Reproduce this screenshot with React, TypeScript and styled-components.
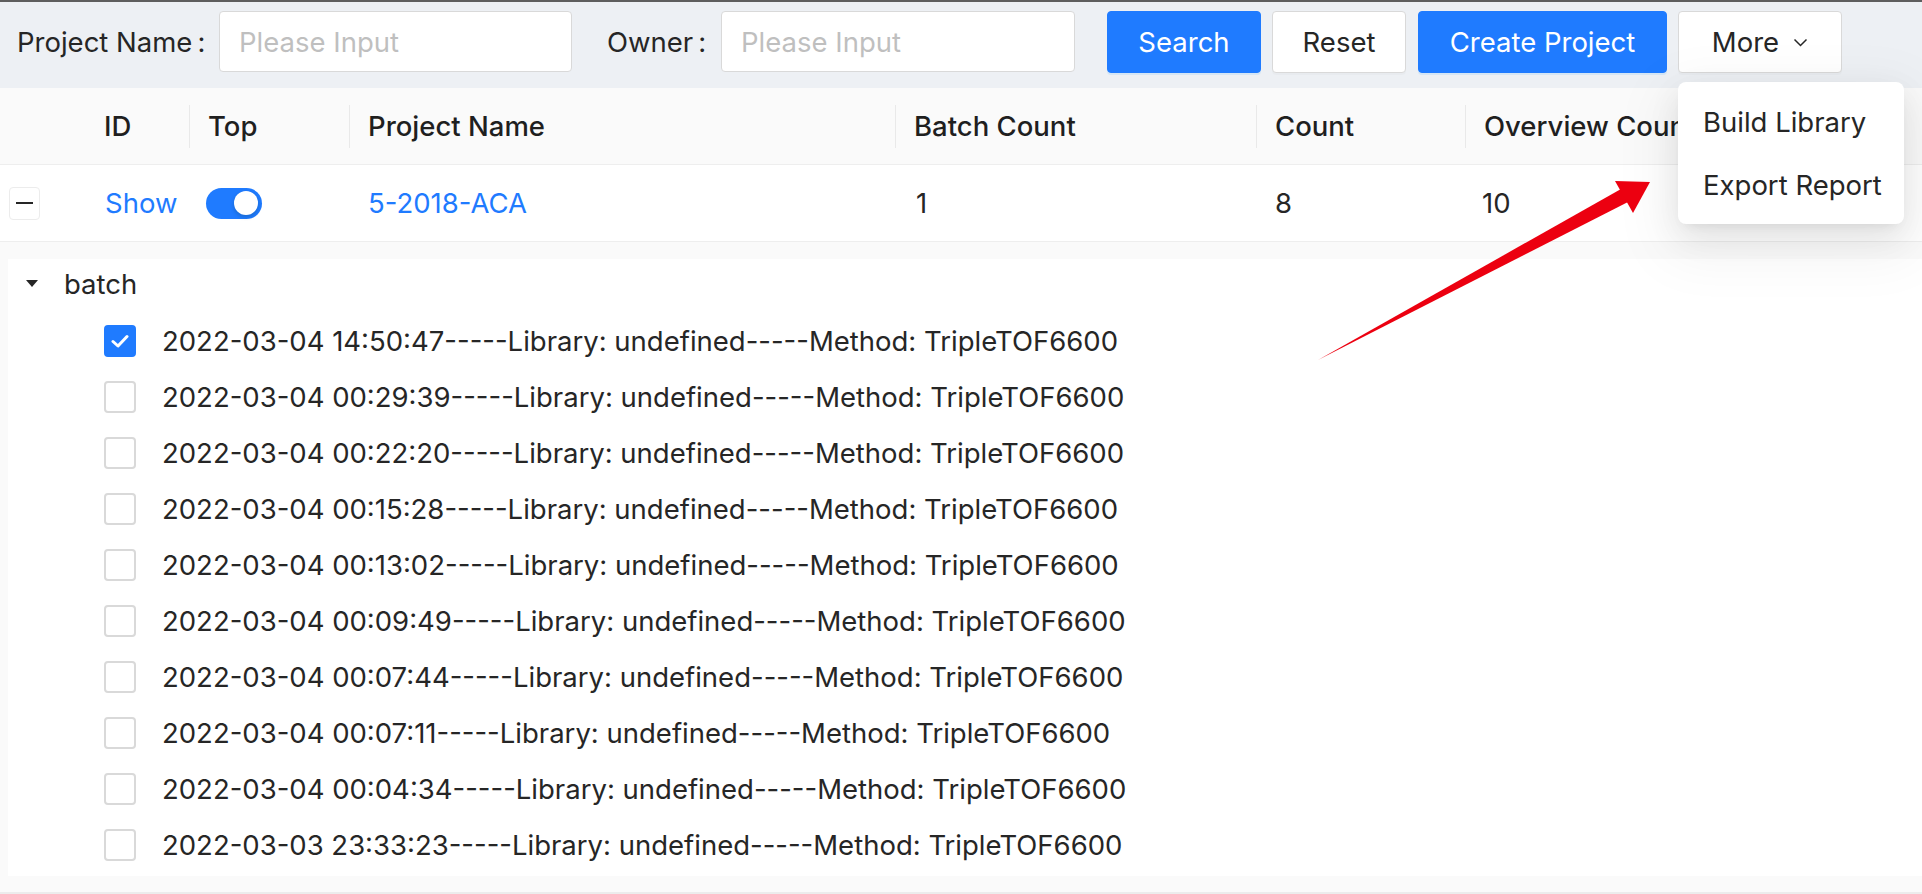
import React from 'react';
import styled, { createGlobalStyle } from 'styled-components';

const Global = createGlobalStyle`
  html, body { margin: 0; padding: 0; background: #fff; }
  body {
    font-family: Inter, "Liberation Sans", Arial, sans-serif;
    color: #262626;
    -webkit-font-smoothing: antialiased;
  }
  * { box-sizing: border-box; }
`;

const BLUE = '#1f7bff';
const FS = '27.5px';
const COLS = '85px 104px 160px 546px 361px 209px 1fr';

const Page = styled.div`
  position: relative;
  width: 1922px;
  height: 894px;
  overflow: hidden;
  border-top: 2px solid #5e5e5e;
  display: flex;
  flex-direction: column;
  font-size: ${FS};
`;

const Toolbar = styled.div`
  height: 86px;
  flex: none;
  background: #edf0f4;
  display: flex;
  align-items: flex-start;
  padding: 9px 0 0 17px;
`;

const Label = styled.label<{ $w: number }>`
  width: ${p => p.$w}px;
  height: 61px;
  flex: none;
  display: flex;
  align-items: center;
  white-space: nowrap;
  color: #262626;
`;

const Colon = styled.span`
  margin-left: 5px;
`;

const Input = styled.input<{ $w: number }>`
  width: ${p => p.$w}px;
  height: 61px;
  flex: none;
  border: 1px solid #d9d9d9;
  border-radius: 4px;
  background: #fff;
  padding: 0 19px;
  font: inherit;
  font-size: ${FS};
  color: #262626;
  outline: none;
  &::placeholder { color: #bfbfbf; }
`;

const Button = styled.button<{ $w: number; $ml: number; $primary?: boolean }>`
  width: ${p => p.$w}px;
  margin-left: ${p => p.$ml}px;
  height: 62px;
  flex: none;
  border-radius: 4px;
  font: inherit;
  font-size: ${FS};
  display: flex;
  align-items: center;
  justify-content: center;
  gap: 14px;
  cursor: pointer;
  border: 1px solid ${p => (p.$primary ? BLUE : '#d9d9d9')};
  background: ${p => (p.$primary ? BLUE : '#fff')};
  color: ${p => (p.$primary ? '#fff' : '#262626')};
  box-shadow: ${p => (p.$primary ? '0 2px 0 rgba(5,145,255,0.1)' : '0 2px 0 rgba(0,0,0,0.02)')};
`;

const Spacer = styled.div<{ $w: number }>`
  width: ${p => p.$w}px;
  flex: none;
`;

const HeaderRow = styled.div`
  display: grid;
  grid-template-columns: ${COLS};
  height: 77px;
  flex: none;
  background: #fafafa;
  border-bottom: 1px solid #eeeeee;
  align-items: center;
`;

const HeadCell = styled.div<{ $sep?: boolean }>`
  position: relative;
  height: 100%;
  display: flex;
  align-items: center;
  padding-left: 19px;
  font-weight: 500;
  color: #1f1f1f;
  white-space: nowrap;
  overflow: hidden;
  &::before {
    content: '';
    display: ${p => (p.$sep ? 'block' : 'none')};
    position: absolute;
    left: 0;
    top: 17px;
    height: 43px;
    width: 1px;
    background: #e9e9e9;
  }
`;

const DataRow = styled.div`
  display: grid;
  grid-template-columns: ${COLS};
  height: 77px;
  flex: none;
  background: #fff;
  border-bottom: 1px solid #eeeeee;
  align-items: center;
`;

const Cell = styled.div<{ $pl?: number; $link?: boolean }>`
  padding-left: ${p => p.$pl ?? 19}px;
  display: flex;
  align-items: center;
  color: ${p => (p.$link ? BLUE : '#262626')};
  white-space: nowrap;
`;

const ExpandIcon = styled.span`
  width: 31px;
  height: 33px;
  border: 1px solid #ececec;
  border-radius: 4px;
  background: #fff;
  display: flex;
  align-items: center;
  justify-content: center;
  &::after {
    content: '';
    width: 17px;
    height: 2px;
    background: #262626;
  }
`;

const Switch = styled.span<{ $on?: boolean }>`
  width: 56px;
  height: 31px;
  border-radius: 16px;
  background: ${p => (p.$on ? BLUE : '#bfbfbf')};
  display: flex;
  align-items: center;
  justify-content: ${p => (p.$on ? 'flex-end' : 'flex-start')};
  padding: 0 4px;
  &::after {
    content: '';
    width: 24px;
    height: 24px;
    border-radius: 50%;
    background: #fff;
    box-shadow: 0 2px 4px rgba(0, 35, 11, 0.2);
  }
`;

const Expanded = styled.div`
  flex: 1;
  background: #fafafa;
  padding: 17px 0 16px 8px;
  border-bottom: 2px solid #ececec;
  display: flex;
`;

const TreeBox = styled.div`
  flex: 1;
  background: #fff;
  display: flex;
  flex-direction: column;
  gap: 10px;
`;

const TreeNode = styled.div<{ $indent: number; $h?: number }>`
  height: ${p => p.$h ?? 46}px;
  flex: none;
  display: flex;
  align-items: center;
  padding-left: ${p => p.$indent}px;
  white-space: nowrap;
  color: #262626;
`;

const Caret = styled.span`
  width: 0;
  height: 0;
  border-left: 6.5px solid transparent;
  border-right: 6.5px solid transparent;
  border-top: 7px solid #262626;
  margin-right: 26px;
`;

const Check = styled.span<{ $checked?: boolean }>`
  width: 32px;
  height: 32px;
  flex: none;
  border-radius: 4px;
  border: 2px solid ${p => (p.$checked ? BLUE : '#d9d9d9')};
  background: ${p => (p.$checked ? BLUE : '#fff')};
  display: flex;
  align-items: center;
  justify-content: center;
  margin-right: 26px;
`;

const Menu = styled.div`
  position: absolute;
  left: 1678px;
  top: 80px;
  width: 226px;
  padding: 8px 0;
  background: #fff;
  border-radius: 8px;
  box-shadow: 0 12px 32px 0 rgba(0, 0, 0, 0.08), 0 6px 12px -8px rgba(0, 0, 0, 0.12),
    0 18px 56px 16px rgba(0, 0, 0, 0.05);
  display: flex;
  flex-direction: column;
`;

const MenuItem = styled.div`
  height: 63px;
  display: flex;
  align-items: center;
  padding-left: 25px;
  color: #262626;
  white-space: nowrap;
`;

const Overlay = styled.svg`
  position: absolute;
  left: 0;
  top: -2px;
  width: 1922px;
  height: 894px;
  pointer-events: none;
`;

const batches = [
  '2022-03-04 14:50:47',
  '2022-03-04 00:29:39',
  '2022-03-04 00:22:20',
  '2022-03-04 00:15:28',
  '2022-03-04 00:13:02',
  '2022-03-04 00:09:49',
  '2022-03-04 00:07:44',
  '2022-03-04 00:07:11',
  '2022-03-04 00:04:34',
  '2022-03-03 23:33:23',
];

export default function App() {
  return (
    <>
      <Global />
      <Page>
        <Toolbar>
          <Label $w={202}>
            Project Name<Colon>:</Colon>
          </Label>
          <Input $w={353} placeholder="Please Input" />
          <Spacer $w={35} />
          <Label $w={114}>
            Owner<Colon>:</Colon>
          </Label>
          <Input $w={354} placeholder="Please Input" />
          <Button $primary $w={154} $ml={32}>Search</Button>
          <Button $w={134} $ml={11}>Reset</Button>
          <Button $primary $w={249} $ml={12}>Create Project</Button>
          <Button $w={164} $ml={11}>
            More
            <svg width="15" height="9" viewBox="0 0 15 9">
              <polyline points="1.5,1.5 7.5,7.5 13.5,1.5" fill="none" stroke="#262626" strokeWidth="1.5" />
            </svg>
          </Button>
        </Toolbar>

        <HeaderRow>
          <HeadCell />
          <HeadCell>ID</HeadCell>
          <HeadCell $sep>Top</HeadCell>
          <HeadCell $sep>Project Name</HeadCell>
          <HeadCell $sep>Batch Count</HeadCell>
          <HeadCell $sep>Count</HeadCell>
          <HeadCell $sep>Overview Count</HeadCell>
        </HeaderRow>

        <DataRow>
          <Cell $pl={9}><ExpandIcon /></Cell>
          <Cell $pl={20} $link>Show</Cell>
          <Cell $pl={17}><Switch $on /></Cell>
          <Cell $link>5-2018-ACA</Cell>
          <Cell $pl={21}>1</Cell>
          <Cell>8</Cell>
          <Cell $pl={17}>10</Cell>
        </DataRow>

        <Expanded>
          <TreeBox>
            <TreeNode $indent={18} $h={49}>
              <Caret />
              batch
            </TreeNode>
            {batches.map((b, i) => (
              <TreeNode key={b} $indent={96}>
                <Check $checked={i === 0}>
                  {i === 0 && (
                    <svg width="18" height="14" viewBox="0 0 18 14">
                      <polyline points="2,7.5 7,12 16,2.5" fill="none" stroke="#fff" strokeWidth="3" strokeLinecap="round" strokeLinejoin="round" />
                    </svg>
                  )}
                </Check>
                {b}-----Library: undefined-----Method: TripleTOF6600
              </TreeNode>
            ))}
          </TreeBox>
        </Expanded>

        <Menu>
          <MenuItem>Build Library</MenuItem>
          <MenuItem>Export Report</MenuItem>
        </Menu>

        <Overlay viewBox="0 0 1922 894">
          <polygon points="1318,360 1621,189 1628,202" fill="#ec0010" />
          <polygon points="1650,182 1615,181 1633,213" fill="#ec0010" />
        </Overlay>
      </Page>
    </>
  );
}
